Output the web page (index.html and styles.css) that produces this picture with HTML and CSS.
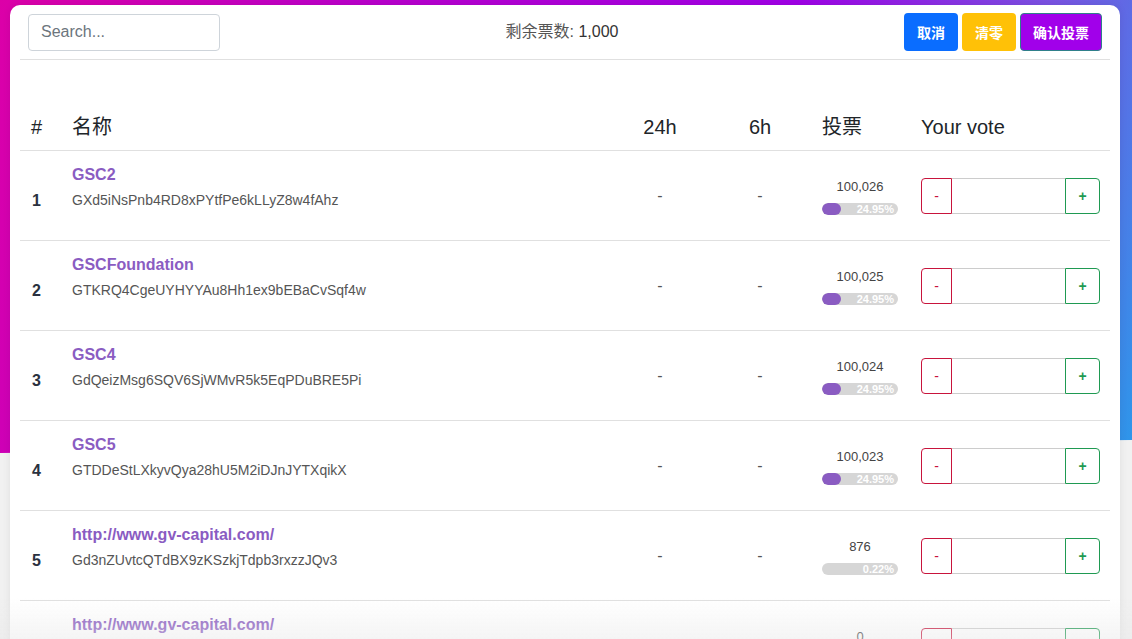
FILE: index.html
```html
<!DOCTYPE html>
<html lang="zh">
<head>
<meta charset="utf-8">
<title>投票</title>
<link rel="stylesheet" href="styles.css">
</head>
<body>
<div class="bg-band"></div>
<main class="card">
  <header class="topbar">
    <input class="search" type="text" placeholder="Search...">
    <div class="remaining">剩余票数: <span class="num">1,000</span></div>
    <div class="actions">
      <button class="btn btn-blue">取消</button>
      <button class="btn btn-yellow">清零</button>
      <button class="btn btn-purple">确认投票</button>
    </div>
  </header>

  <div class="table">
    <div class="row head">
      <div class="c-idx">#</div>
      <div class="c-name">名称</div>
      <div class="c-mid">24h</div>
      <div class="c-mid">6h</div>
      <div class="c-votes">投票</div>
      <div class="c-vote">Your vote</div>
    </div>

    <div class="row">
      <div class="c-idx idx">1</div>
      <div class="c-name"><a class="name">GSC2</a><div class="addr">GXd5iNsPnb4RD8xPYtfPe6kLLyZ8w4fAhz</div></div>
      <div class="c-mid dash">-</div>
      <div class="c-mid dash">-</div>
      <div class="c-votes"><div class="count">100,026</div><div class="bar"><div class="fill" style="width:25%"></div><span class="pct">24.95%</span></div></div>
      <div class="c-vote"><div class="vgroup"><button class="vminus">-</button><input class="vinput" type="text"><button class="vplus">+</button></div></div>
    </div>

    <div class="row">
      <div class="c-idx idx">2</div>
      <div class="c-name"><a class="name">GSCFoundation</a><div class="addr">GTKRQ4CgeUYHYYAu8Hh1ex9bEBaCvSqf4w</div></div>
      <div class="c-mid dash">-</div>
      <div class="c-mid dash">-</div>
      <div class="c-votes"><div class="count">100,025</div><div class="bar"><div class="fill" style="width:25%"></div><span class="pct">24.95%</span></div></div>
      <div class="c-vote"><div class="vgroup"><button class="vminus">-</button><input class="vinput" type="text"><button class="vplus">+</button></div></div>
    </div>

    <div class="row">
      <div class="c-idx idx">3</div>
      <div class="c-name"><a class="name">GSC4</a><div class="addr">GdQeizMsg6SQV6SjWMvR5k5EqPDuBRE5Pi</div></div>
      <div class="c-mid dash">-</div>
      <div class="c-mid dash">-</div>
      <div class="c-votes"><div class="count">100,024</div><div class="bar"><div class="fill" style="width:25%"></div><span class="pct">24.95%</span></div></div>
      <div class="c-vote"><div class="vgroup"><button class="vminus">-</button><input class="vinput" type="text"><button class="vplus">+</button></div></div>
    </div>

    <div class="row">
      <div class="c-idx idx">4</div>
      <div class="c-name"><a class="name">GSC5</a><div class="addr">GTDDeStLXkyvQya28hU5M2iDJnJYTXqikX</div></div>
      <div class="c-mid dash">-</div>
      <div class="c-mid dash">-</div>
      <div class="c-votes"><div class="count">100,023</div><div class="bar"><div class="fill" style="width:25%"></div><span class="pct">24.95%</span></div></div>
      <div class="c-vote"><div class="vgroup"><button class="vminus">-</button><input class="vinput" type="text"><button class="vplus">+</button></div></div>
    </div>

    <div class="row">
      <div class="c-idx idx">5</div>
      <div class="c-name"><a class="name">http://www.gv-capital.com/</a><div class="addr">Gd3nZUvtcQTdBX9zKSzkjTdpb3rxzzJQv3</div></div>
      <div class="c-mid dash">-</div>
      <div class="c-mid dash">-</div>
      <div class="c-votes"><div class="count">876</div><div class="bar"><div class="fill" style="width:0%"></div><span class="pct">0.22%</span></div></div>
      <div class="c-vote"><div class="vgroup"><button class="vminus">-</button><input class="vinput" type="text"><button class="vplus">+</button></div></div>
    </div>

    <div class="row">
      <div class="c-idx idx">6</div>
      <div class="c-name"><a class="name">http://www.gv-capital.com/</a><div class="addr">GPSJkHZAcwjTmvAJyB6JnbsgmAyUwFHSuP</div></div>
      <div class="c-mid dash">-</div>
      <div class="c-mid dash">-</div>
      <div class="c-votes"><div class="count">0</div><div class="bar"><div class="fill" style="width:0%"></div><span class="pct">0.00%</span></div></div>
      <div class="c-vote"><div class="vgroup"><button class="vminus">-</button><input class="vinput" type="text"><button class="vplus">+</button></div></div>
    </div>
  </div>
</main>
<div class="bottom-fade"></div>
</body>
</html>
```

FILE: styles.css
```css
* { box-sizing: border-box; }

html, body {
  margin: 0;
  padding: 0;
}

body {
  background: #f1f1f1;
  font-family: "Liberation Sans", Arial, "Noto Sans CJK SC", sans-serif;
  color: #212529;
  position: relative;
  min-height: 639px;
  overflow: hidden;
}

.bg-band {
  position: absolute;
  left: 0;
  top: 0;
  width: 100%;
  height: 460px;
  background: linear-gradient(108deg, #dc00a8 0%, #b800cc 30%, #a000e6 62%, #7a52e2 82%, #2c98ea 100%);
  clip-path: polygon(0 0, 100% 0, 100% 440px, 0 453px);
  z-index: 0;
}

.card {
  position: relative;
  z-index: 1;
  margin: 5px 12px 0 10px;
  background: #fff;
  border-radius: 10px 10px 0 0;
  padding: 8px 10px 0;
  box-shadow: 0 0 8px rgba(0, 0, 0, 0.08);
  min-height: 700px;
}

.topbar {
  display: flex;
  align-items: center;
  justify-content: space-between;
  padding: 0 8px 8px;
  border-bottom: 1px solid #e0e0e0;
  height: 47px;
}

.search {
  width: 192px;
  height: 37px;
  border: 1px solid #ced4da;
  border-radius: 4px;
  padding: 0 12px;
  font-family: inherit;
  font-size: 16px;
  color: #495057;
  outline: none;
}
.search::placeholder { color: #6c757d; }

.remaining {
  font-size: 16px;
  color: #555;
  margin-top: -4px;
}
.remaining .num { color: #333; }

.actions {
  display: flex;
  gap: 4px;
}

.btn {
  height: 38px;
  border: 1px solid transparent;
  border-radius: 4px;
  color: #fff;
  font-family: inherit;
  font-weight: 700;
  font-size: 14px;
  padding: 0 12px;
  cursor: pointer;
}
.btn-blue { background: #0a6dff; width: 54px; }
.btn-yellow { background: #ffc107; width: 54px; }
.btn-purple { background: #a100ea; width: 82px; border-color: #2f7f8a; }

.row {
  display: grid;
  grid-template-columns: 40px 1fr 100px 100px 99px 201px;
  height: 90px;
  border-bottom: 1px solid #e0e0e0;
}

.row > div { padding: 0 12px; }

.row.head {
  height: 91px;
  align-items: end;
  font-size: 20px;
  line-height: 24px;
  padding-bottom: 11px;
  color: #212529;
}
.row.head .c-idx { padding-left: 11px; }

.c-mid { text-align: center; }

.idx {
  font-weight: 700;
  font-size: 16px;
  color: #2a3140;
  align-self: center;
  padding-top: 10px !important;
}

.c-name { padding-top: 12px !important; }
.name {
  display: block;
  color: #8a5cc2;
  font-weight: 700;
  font-size: 16px;
  line-height: 24px;
  text-decoration: none;
}
.addr {
  font-size: 14px;
  line-height: 20px;
  margin-top: 3px;
  color: #555;
}

.dash {
  align-self: center;
  font-size: 16px;
  color: #555;
}

.row:not(.head) .c-votes {
  align-self: center;
  padding-top: 2px;
}
.count {
  width: 76px;
  text-align: center;
  font-size: 13px;
  line-height: 16px;
  color: #444;
}
.bar {
  position: relative;
  width: 76px;
  height: 12px;
  margin-top: 8px;
  background: #d6d6d6;
  border-radius: 6px;
  overflow: hidden;
}
.fill {
  height: 100%;
  background: #8a5cc2;
  border-radius: 6px;
}
.pct {
  position: absolute;
  right: 4px;
  top: 0;
  font-size: 11px;
  line-height: 12px;
  font-weight: 700;
  color: #fff;
}

.row:not(.head) .c-vote { align-self: center; }
.vgroup {
  display: flex;
  width: 179px;
  height: 36px;
}
.vminus, .vplus {
  background: #fff;
  font-family: inherit;
  font-size: 14px;
  padding: 0;
  cursor: pointer;
}
.vminus {
  width: 31px;
  border: 1px solid #c8143c;
  color: #c8143c;
  border-radius: 4px 0 0 4px;
}
.vplus {
  width: 35px;
  border: 1px solid #1f9a52;
  color: #1f9a52;
  font-weight: 700;
  border-radius: 0 4px 4px 0;
}
.vinput {
  flex: 1;
  min-width: 0;
  border: 1px solid #ccc;
  border-left: 0;
  border-right: 0;
  outline: none;
}

.bottom-fade {
  position: fixed;
  left: 0;
  right: 0;
  bottom: 0;
  height: 42px;
  background: linear-gradient(to bottom, rgba(238, 238, 238, 0), rgba(232, 232, 232, 0.45));
  pointer-events: none;
  z-index: 2;
}
```
